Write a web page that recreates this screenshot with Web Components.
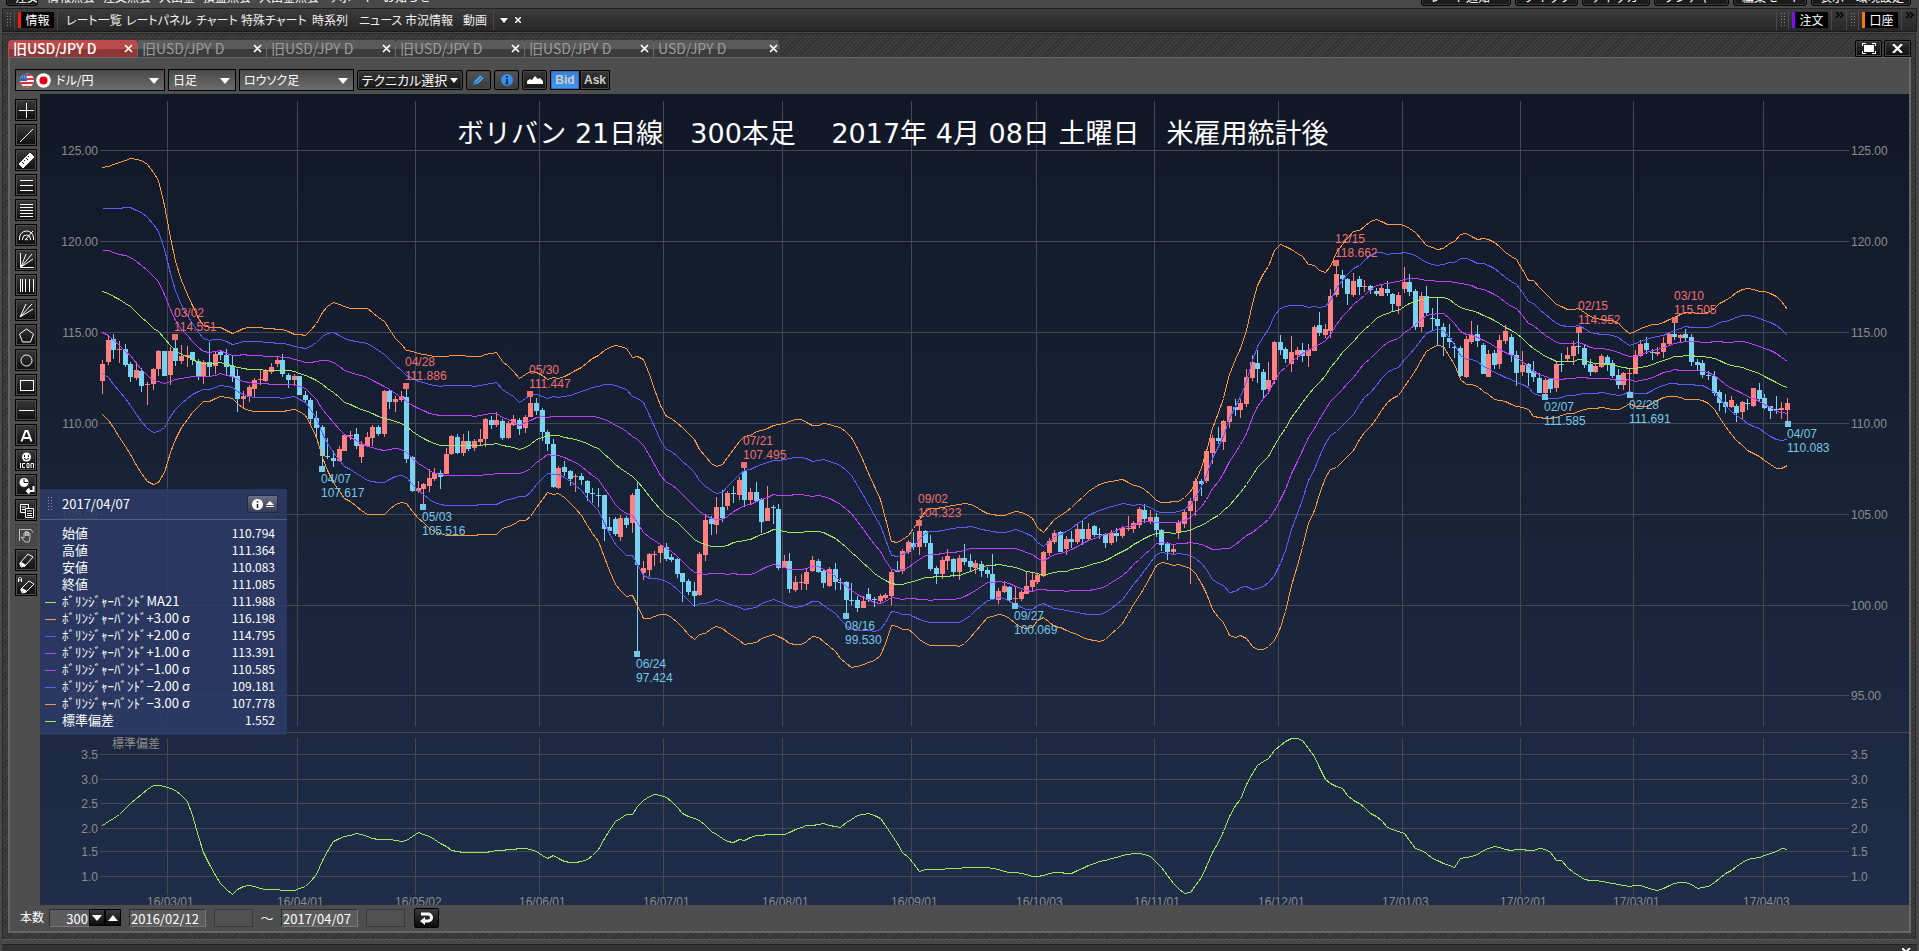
<!DOCTYPE html>
<html lang="ja">
<head>
<meta charset="utf-8">
<title>USD/JPY D</title>
<style>
  html, body { margin: 0; height: 100%; background: #484848; }
  body { overflow: hidden; font: 12px/16px "Noto Sans CJK JP", "Liberation Sans", sans-serif; color: #fff; }
</style>
</head>
<body>
<trading-desk></trading-desk>
<script>
const BASE = `*{box-sizing:border-box}button,input,select{font:inherit;color:inherit;margin:0;padding:0;border-radius:0}`;
class Piece extends HTMLElement {
  constructor() {
    super();
    this.attachShadow({ mode: 'open' }).innerHTML = `<style>${BASE}${this.css()}</style>${this.html()}`;
  }
  css() { return ''; }
  html() { return '<slot></slot>'; }
}

/* Cut-off row at the top edge */
customElements.define('top-strip', class extends Piece {
  css() { return `
    :host{display:flex;height:8px;overflow:hidden;align-items:flex-end;padding:0 8px 2px 6px;background:#484848}
    button{flex:none;height:22px;border:1px solid #000;border-radius:3px;background:#1b1b1b;box-shadow:inset 0 0 0 1px #383838;line-height:16px;text-align:left;padding:4px 0 0 8px;overflow:hidden;white-space:nowrap}
    nav{display:flex;gap:8px;padding:0 0 1px 9px;white-space:nowrap;flex:1}
    a{color:#fff;text-decoration:none}
    div{display:flex;gap:4px}`; }
  html() { return `<button style="width:32px">注文</button><nav>${['情報照会', '注文照会', '入出金', '損益照会', '入出金照会', 'サポート', 'お知らせ'].map(t => `<a href="#">${t}</a>`).join('')}</nav>
    <div>${[['レート通知', 90], ['クイック', 63], ['ティッカー', 68], ['ランチャー', 75], ['編集モード', 74], ['表示・環境設定', 100]].map(([t, w]) => `<button style="width:${w}px">${t}</button>`).join('')}</div>`; }
});

/* Category label with a coloured edge */
customElements.define('bar-label', class extends Piece {
  css() { return `
    :host{display:block}
    div{height:16px;border-left:3px solid var(--edge,#f00);background:#000;padding:0 4px;font-size:12px;line-height:15px;white-space:nowrap;min-width:36px;text-align:center}`; }
  html() { return `<div><slot></slot></div>`; }
});

customElements.define('info-bar', class extends Piece {
  css() { return `
    :host{display:flex;height:24px;margin:0 2px;border:1px solid #222;border-bottom-color:#1a1a1a;background:linear-gradient(#3c3c3c,#262626);align-items:center;font-feature-settings:"palt"}
    .grip{width:6px;height:16px;margin:0 2px 0 3px;background:radial-gradient(circle,#888 0 1px,transparent 1px) 0 0/3px 3px}
    .v{width:1px;height:20px;background:#4a4a4a}
    bar-label{margin:0 3px 0 3px}
    nav{display:grid;grid-template-columns:60px 70px 45px 71px 47px 46px 58px 30px;padding-left:8px;white-space:nowrap}
    a{color:#eee;text-decoration:none}
    button{background:none;border:0;width:14px;height:16px;display:grid;place-items:center}
    .sp{flex:1}
    .more{align-self:flex-start;width:14px;height:12px}`; }
  html() {
    const more = `<button class="more" aria-label="more"><svg width="9" height="6"><path d="M1 0l3 3-3 3M5 0l3 3-3 3" fill="none" stroke="#000" stroke-width="1.5"/></svg></button>`;
    return `<span class="grip"></span><span class="v"></span><bar-label style="--edge:#f21b0c">情報</bar-label><span class="v"></span>
    <nav>${['レート一覧', 'レートパネル', 'チャート', '特殊チャート', '時系列', 'ニュース', '市況情報', '動画'].map(t => `<a href="#">${t}</a>`).join('')}</nav>
    <span class="v"></span><button aria-label="menu" style="margin-left:3px"><svg width="8" height="5"><path d="M0 0h8l-4 5z" fill="#fff"/></svg></button>
    <button aria-label="close"><svg width="6" height="6"><path d="M0 0l6 6M6 0l-6 6" stroke="#fff" stroke-width="1.5"/></svg></button>
    <span class="sp"></span>
    <span class="v"></span><span class="grip"></span><span class="v"></span><bar-label style="--edge:#7d0cf2">注文</bar-label><span class="v"></span>${more}
    <span class="v"></span><span class="grip"></span><span class="v"></span><bar-label style="--edge:#f27a0c">口座</bar-label><span class="v"></span>${more}`; }
});

customElements.define('chart-tab', class extends Piece {
  css() { return `
    :host{display:block;width:129px;height:17px}
    div{display:flex;height:17px;align-items:center;justify-content:space-between;padding:0 4px;border-radius:4px 0 0 0;border-left:1px solid #6a6a6a;background:linear-gradient(#5a5a5a 0 50%,#3c3c3c 50%);color:#9c9c9c;font-size:14px;line-height:17px;white-space:nowrap}
    :host([active]) div{background:linear-gradient(#bb4a4a 0 50%,#8f3737 50%);border-color:#bb4a4a;color:#fff;font-weight:500}
    :host([last]) div{clip-path:polygon(0 0,97% 0,100% 100%,0 100%)}
    button{background:none;border:0;width:9px;height:9px;display:grid}`; }
  html() { return `<div><slot></slot><button aria-label="close tab"><svg width="9" height="9"><path d="M1 1l7 7M8 1l-7 7" stroke="#fff" stroke-width="1.7"/></svg></button></div>`; }
});

customElements.define('tab-strip', class extends Piece {
  css() { return `
    :host{display:flex;height:17px}
    .sp{flex:1}
    .w{width:27px;height:17px;border:1px solid #000;box-shadow:inset 0 0 0 1px #444;background:linear-gradient(#333,#0c0c0c);display:grid;place-items:center;border-radius:2px 2px 0 0}`; }
  html() { return `<slot></slot><span class="sp"></span>
    <button class="w" aria-label="maximise"><svg width="14" height="11"><path d="M0 3V0h4M10 0h4v3M14 8v3h-4M4 11H0V8" fill="none" stroke="#fff" stroke-width="2"/><rect x="2" y="2" width="10" height="7" fill="#fff"/></svg></button>
    <button class="w" style="margin-left:2px" aria-label="close"><svg width="11" height="9"><path d="M1 0l9 9M10 0l-9 9" stroke="#fff" stroke-width="2.2"/></svg></button>`; }
});

customElements.define('chart-toolbar', class extends Piece {
  css() { return `
    :host{display:flex;height:36px;padding:11px 0 0 5px;gap:3px;background:#4e4e4e;font-size:13px;font-feature-settings:"palt"}
    label{position:relative;display:block}
    select{appearance:none;display:block;width:100%;height:22px;border:1px solid #000;background:linear-gradient(#4a4a4a,#6c6c6c);padding:0 20px 1px 4px;line-height:18px;font-size:12px}
    .pair select{padding-left:40px}
    label>svg.ar{position:absolute;right:6px;top:9px}
    .flags{position:absolute;left:4px;top:4px}
    .b{height:20px;margin-top:1px;border:1px solid #000;border-radius:2px;background:linear-gradient(#383838,#141414);box-shadow:inset 0 0 0 1px #464646;width:25px;display:flex;align-items:center;justify-content:center}
    .g{background:linear-gradient(#545454,#3c3c3c)}
    .tech{width:106px;gap:3px;font-size:13px;white-space:nowrap}
    .ba{display:flex;font:bold 12px/16px "Liberation Sans",sans-serif}
    .ba .b{width:30px;border-radius:0;color:#ccc}
    .ba .on{background:linear-gradient(#3a7fd0,#3f97f0);box-shadow:inset 0 0 0 1px #2c70c4}`; }
  html() {
    const ar = `<svg class="ar" width="10" height="6"><path d="M0 0h10l-5 6z" fill="#fff"/></svg>`;
    return `
    <label class="pair" style="width:150px"><select aria-label="通貨ペア"><option>ドル/円</option></select>
      <svg class="flags" width="33" height="15"><defs><clipPath id="c"><circle cx="8" cy="7.500" r="7"/></clipPath></defs>
      <g clip-path="url(#c)"><rect width="16" height="15" fill="#f4eeee"/><path d="M0 2h16M0 6h16M0 10h16M0 14h16" stroke="#d8303a" stroke-width="2"/><rect width="8" height="8" fill="#2f5fae"/><path d="M1 3h7M1 5h7" stroke="#b8cdf0" stroke-dasharray="1 1"/></g>
      <circle cx="24.500" cy="7.500" r="7.300" fill="#fafafa"/><circle cx="24.500" cy="7.500" r="4" fill="#e80010"/></svg>${ar}</label>
    <label style="width:68px"><select aria-label="足種"><option>日足</option></select>${ar}</label>
    <label style="width:115px"><select aria-label="表示"><option>ロウソク足</option></select>${ar}</label>
    <button class="b tech">テクニカル選択<svg width="8" height="5"><path d="M0 0h8l-4 5z" fill="#fff"/></svg></button>
    <button class="b g" aria-label="描画"><svg width="13" height="12"><path d="M1 11l1-4 6-6 4 3-7 6z" fill="#2e7fd8"/><path d="M3 8l6-6M5 10l6-6" stroke="#9cc8ff" stroke-width=".8"/></svg></button>
    <button class="b g" aria-label="情報"><svg width="12" height="12"><circle cx="6" cy="6" r="6" fill="#3390ee"/><path d="M6 2v2M6 5v5M4.500 9.500h3" stroke="#234" stroke-width="1.800"/></svg></button>
    <button class="b" aria-label="山"><svg width="16" height="10"><path d="M0 9V6l3-2 2 1 3-4 3 3 2-1 3 3v3z" fill="#fff"/></svg></button>
    <div class="ba"><button class="b on">Bid</button><button class="b">Ask</button></div>`; }
});

const TOOLS = [
  ['十字', '<path d="M9.500 2v15M2 9.500h15"/>'],
  ['直線', '<path d="M3 16L16 3"/>'],
  ['定規', '<path d="M2 13L13 2l4 4L6 17z" fill="#fff"/><path d="M5 11l2 2M7 9l1 1M9 7l2 2M11 5l1 1" stroke="#111"/>'],
  ['三本線', '<path d="M3 4.500h13M3 9.500h13M3 14.500h13"/>'],
  ['五本線', '<path d="M3 3.500h13M3 6.500h13M3 9.500h13M3 12.500h13M3 15.500h13"/>'],
  ['円弧', '<path d="M2.500 14v-2a7 7 0 0 1 14 0v2M5.500 14v-1a4 4 0 0 1 8 0v1M8 14a2 2 0 0 1 3 0M8 14l8-9"/>'],
  ['ファン', '<path d="M3.500 2v14.500H17M4 16L9 3M4 16L15 3M4 16L16 8"/>'],
  ['縦線', '<path d="M3.500 3v13M5.500 3v13M8.500 3v13M12.500 3v13M16.500 3v13"/>'],
  ['放射線', '<path d="M3 16L9 3M3 16L15 3M3 16L16 8"/>'],
  ['五角形', '<path d="M9.500 3l7 5-3 8h-8l-3-8z"/>'],
  ['円', '<circle cx="9.500" cy="9.500" r="5.500"/>'],
  ['四角', '<rect x="3.500" y="4.500" width="13" height="10"/>'],
  ['水平線', '<path d="M2 9.500h15"/>'],
  ['文字', '<path d="M4.500 15.500L8.500 5h2l4 10.500M6.500 12h6" stroke-width="2"/>'],
  ['アイコン', '<circle cx="9.500" cy="6" r="4.500" fill="#fff" stroke="none"/><path d="M7.500 4v2M11.500 4v2M7 7.500q2.500 2 5 0" stroke="#111"/><path d="M3.500 12v5M8 12.500H5.500v4H8M10 12.500h2v4h-2zM14 17v-4.500h2.500V17"/>'],
  ['履歴', '<circle cx="7" cy="6.500" r="4.500" fill="#fff" stroke="none"/><path d="M7 3v3.500h4" stroke="#111"/><path d="M16.500 10v5H10M12.500 12.500L10 15l2.500 2.500" stroke-width="2"/>'],
  ['複写', '<path d="M3.500 3.500h8v8h-8zM5 6h4M5 8.500h4"/><path d="M8.500 7.500h8v9h-8z" fill="#111"/><path d="M10 10h5M10 12.500h5M10 14.500h5"/>'],
  ['移動', '<path d="M2.500 15V3.500H14l2 3"/><path d="M8 16l-4-5 3 1V7h1.500v3V5.500H10V10V6h1.500v4V7.500H13V12l-1 4z"/>'],
  ['消去', '<path d="M3 12l8-9 5 3-8 9-4 1z"/><path d="M3 12l5 3" stroke-width="3"/>'],
  ['全消去', '<path d="M4 13l8-8 5 3-8 8-4 1zM1.500 6V2.500l1-1h1l1 1V6M2 4h3"/><path d="M4 13l5 3" stroke-width="3"/>'],
];
customElements.define('draw-tools', class extends Piece {
  css() { return `
    :host{display:flex;flex-direction:column;gap:3px;width:30px;padding:5px 0 0 5px;background:#4e4e4e}
    button{width:22px;height:22px;border:1px solid #000;background:linear-gradient(#3a3a3a,#0e0e0e);box-shadow:inset 0 0 0 1px #4c4c4c;display:grid;place-items:center}
    button:disabled{background:#444;border-color:#3a3a3a;opacity:.65}
    svg{display:block;fill:none;stroke:#fff}`; }
  html() { return TOOLS.map(([n, d]) => `<button aria-label="${n}"${n === '移動' ? ' disabled' : ''}><svg width="19" height="19">${d}</svg></button>`).join(''); }
});

/* ---- chart data: each block has an origin and a step per unit; candles are high, top, bottom, low, u(p)/d(own) ---- */
const CANDLES = [
  [90, `809 822 873 911u 738 750 815 825u 732 747 780 806d 753 777 780 818u 762 777 825 830d 816 822 861 876d 815 840 864 870u 834 843 888 906d 876 882 885 945u 833 837 882 900u
780 783 838 858u 783 783 858 858d 771 783 855 884u 745 774 813 828d 765 798 813 822u 768 796 800 831u 786 786 810 825d 807 813 858 870d 810 816 860 882u 756 816 830 858d
786 791 828 852u 782 786 795 810d 777 795 831 858d 795 828 860 876d 837 858 927 966d 903 917 928 956u 885 890 921 936u 864 870 897 924u 840 867 870 885u 836 843 873 876u
819 831 846 852u 800 810 822 831u 792 810 852 861d 848 855 870 894d 852 858 870 888u 858 858 915 915d 903 915 930 940d 924 930 987 1006d 963 984 1014 1040d 1005 1011 1098 1130d
1045 1098 1101 1107d 1083 1104 1112 1131d 1067 1077 1113 1116u 1032 1035 1083 1083u 1023 1035 1038 1050u 1015 1033 1068 1077d 1053 1062 1101 1119u 1026 1041 1068 1068u 1005 1011 1045 1068u 1005 1011 1032 1038d
900 903 1032 1041u 900 903 936 957d 918 927 936 966u 903 918 930 936u 897 921 1107 1119d`],
  [100, `1067 1072 1173 1175d 1142 1163 1172 1178u 1149 1152 1167 1212u 1107 1134 1158 1175u 1104 1119 1137 1143u 1110 1119 1131 1167d 1044 1062 1122 1122u 1005 1008 1062 1064u 1002 1011 1059 1062d 1002 1023 1059 1068u
993 1023 1047 1052d 1018 1023 1044 1054u 987 1017 1026 1036u 953 957 1017 1040u 948 960 975 987d 936 960 975 980u 957 963 1014 1020d 963 968 1014 1016u 945 957 975 977u 955 960 987 1005d
945 951 984 998u 890 909 950 950u 894 909 933 945d 924 930 996 1023d 990 996 1032 1052d 1017 1032 1161 1164d 1098 1104 1164 1166u 1083 1101 1116 1128d 1110 1113 1137 1158d 1122 1128 1131 1176u
1119 1128 1140 1155d 1140 1143 1179 1203d 1163 1180 1183 1208d 1163 1185 1188 1221d 1185 1185 1287 1323d 1251 1282 1293 1293d 1251 1257 1302 1308d 1245 1254 1311 1322u 1248 1254 1275 1284d 1180 1185 1269 1298u`],
  [380, `303 327 555 815d 543 564 579 600u 519 521 570 592u 513 521 524 558u 492 497 519 549u 489 502 537 543d 521 530 540 546d 534 537 582 594d 579 579 605 665d 597 602 636 645d
606 633 648 682d 516 521 645 648u 402 420 525 543u 408 417 432 465d 352 381 434 462u 330 381 414 426d 333 339 378 390u 318 339 342 369d 291 300 345 360u 264 272 360 381d
324 336 360 372u 306 336 363 366d 354 357 426 459d 318 384 423 423u 375 381 384 432d 372 387 564 570d 525 543 563 565u 519 543 627 638d 588 606 630 636u 582 605 608 630u
563 576 611 629u 528 540 573 576u 538 543 576 578d 567 573 609 624d 561 567 618 621u 549 567 606 630d 594 606 609 630d 603 606 660 705d 609 660 663 675d 648 660 684 696d
648 663 684 684u 624 642 660 667d 651 658 661 681d 642 648 663 669u 639 645 654 659u 570 576 648 675u 543 572 575 575d 507 513 573 581u 480 486 516 522u 456 489 501 510d
438 453 500 525u 450 453 489 501d 465 489 567 573d 558 564 582 612d 531 540 582 597u 507 528 542 570u 534 537 576 591d 525 534 576 600u 492 534 545 555d 522 543 560 573d
540 549 564 582u 543 552 573 591d 561 570 582 594d 522 582 657 657d 624 633 660 672u 603 618 636 639u 618 621 660 665d 621 654 657 670u 630 636 657 663u 576 618 642 642u
579 600 621 636u 582 585 606 612u 513 516 588 591u 474 483 519 528u 450 459 486 493u 453 456 516 516d`],
  [400, `408 417 447 465u 393 417 427 444d 370 387 426 432u 363 387 417 435d 369 387 417 420u 375 378 405 410d 384 402 405 417d 399 402 429 444d 390 399 429 434u 384 399 408 427d
378 384 408 413u 348 384 387 393u 363 369 387 399u 321 327 375 384u 312 330 357 369d 330 351 366 372u 338 351 390 411d 387 390 435 453d 426 429 456 480d 435 447 456 462u
360 367 396 417u 330 336 372 384u 294 303 333 552u 234 243 303 348u 237 243 252 288d 147 153 243 249u 105 114 159 192u 81 114 122 132d 60 63 126 150u 18 18 66 84u`],
  [200, `597 620 630 648d 597 609 630 654u 507 531 612 620u 465 486 534 543u 450 489 507 548d 507 516 570 597d 486 540 567 582u 423 426 540 552u 405 426 450 465d 441 447 477 489d
408 456 492 516u 441 450 465 480u 429 450 468 486d 432 450 468 501u 375 381 453 453u 336 375 399 408d 372 387 405 414u 267 288 393 414u 198 222 285 291u 210 225 236 264d
234 237 282 315d 219 242 285 290u 228 237 261 285d 240 258 261 276u 255 258 270 282d 264 272 282 288d 255 264 288 288u 243 267 279 288d 279 282 312 333d 276 285 318 342u
201 246 267 279u 222 246 276 288d 267 273 381 390d 276 288 381 396u 258 288 339 348d 324 354 357 390d 294 357 378 438d 369 381 411 468d 372 414 426 444d 429 441 445 474d
438 445 528 531d 408 417 531 534u 363 405 426 432u 375 402 423 441d 429 435 521 523d 450 462 530 531u 450 459 495 507d 405 420 492 507u 375 393 423 432u 402 411 465 486d
453 465 519 558d 453 495 516 528u 489 492 519 558d 483 513 531 546d 519 534 579 579d 534 540 579 588u 534 537 567 579d 486 492 564 576u 459 492 495 516d 441 465 476 486u
423 438 468 495u 396 438 441 462d 435 444 495 504d 477 492 516 528d 492 498 516 519u 462 468 501 504u 465 471 492 513d 480 489 528 534d 507 525 555 567d 516 519 555 570u
507 519 522 576u 450 465 522 522u 420 432 468 471u 411 429 450 462d 447 456 459 480d 441 456 462 468u 411 429 456 474u 396 402 432 435u 366 402 411 420d 402 405 414 426u
387 402 413 426d 402 411 486 498d 477 486 495 510d 480 489 525 534d 513 525 529 540d 513 528 579 588d 570 576 609 633d 582 606 621 639d 588 600 621 624u 612 618 639 666d
603 606 636 660u 597 608 612 630d 564 564 618 621u 549 570 597 603d 582 594 624 627d 618 618 633 657d 588 627 630 642d 606 624 630 657u 594 609 630 663u`],
];
const MA = [
  [0, 90, 3, `307 603 325 609 350 624 390 648 430 687 460 715 475 724 495 748 520 775 540 791 570 803 600 819 625 824 661 816 690 825 720 833 760 838 880 843 913 855 945 869 1000 907 1035 938 1100 964 1150 984 1200 997`],
  [400, 100, 3, `19 980 47 1003 97 1030 130 1037 180 1036 230 1037 289 1030 325 1039 360 1048 380 1040 410 1018 440 1007 475 1007 500 1012`],
  [580, 380, 3, `0 182 55 205 80 228 110 258 160 290 172 303 210 352 250 400 282 418 320 456 345 480 375 494 400 499 430 499 460 488 490 480 515 477 545 462 580 449 630 457 685 455 710 451 735 459 770 478 800 504 850 549 885 582 915 602 940 612 970 613 1000 603 1040 592 1140 585 1180 569 1220 556`],
  [1000, 400, 3, `0 494 45 501 85 516 130 525 165 517 200 513 245 501 310 484 345 466 385 444 430 415 465 399 490 397 520 400 560 394 610 373 660 342 700 303 740 251 770 204 805 168 835 115 865 72`],
  [1290, 200, 3, `0 657 55 582 100 533 125 497 155 460 190 423 220 390 265 351 300 336 325 330 345 316 385 300 415 292 465 292 480 300 515 324 545 330 600 353 655 387 685 402 715 434 740 452 770 470 800 483 850 483 870 478 900 488 960 492 1000 503 1035 506 1070 498 1120 480 1150 470 1190 466 1240 470 1280 477 1310 492 1360 503 1405 519 1440 537 1475 555 1496 563`],
];
const TOP3 = [
  [0, 90, 3, `307 233 355 218 393 203 436 215 455 240 475 272 490 328 500 385 515 465 535 553 555 596 575 642 600 695 615 713 660 712 675 720 695 731 730 714 770 712 850 719 880 731 915 737 945 708 960 678 978 650 1003 634 1030 648 1055 655 1100 654 1125 674 1155 697 1180 738`],
  [400, 100, 3, `19 750 60 762 110 770 160 766 235 769 289 757 310 787 335 808 360 837 380 818 400 812 420 821 447 841 460 832 480 835 505 824 545 800 575 776 595 767 620 744 650 735 680 745 697 771 715 769 730 778 750 828 775 903 795 946 820 957 850 986 880 1012 895 1045 910 1063 940 1096 955 1101 970 1092 985 1068 1010 1035 1030 1008 1050 1005 1070 992 1090 989 1120 975 1150 972 1180 959 1205 959 1240 979 1270 970 1325 982 1355 1012 1385 1072 1410 1132 1440 1195 1460 1270`],
  [580, 380, 3, `935 487 955 487 985 467 1010 430 1025 405 1045 387 1090 382 1145 370 1175 374 1200 388 1225 400`],
  [1000, 400, 3, `0 347 15 347 50 331 75 339 97 355 112 382 130 397 165 354 190 343 235 302 265 273 305 247 370 238 395 254 420 260 440 270 475 309 535 303 565 285 580 260 605 200 622 145 635 90`],
  [1290, 200, 3, `-201 600 -180 515 -147 440 -126 375 -105 270 -81 222 -60 190 -51 155 -27 130 0 146 35 168 55 193 73 195 90 213 108 216 124 195 140 155 165 122 190 95 215 88 235 66 260 56 292 73 345 75 375 96 412 138 445 149 462 145 480 128 497 124 515 97 535 103 565 118 583 113 600 122 615 126 650 162 682 180 700 215 715 240 735 242 750 266 775 288 800 315 835 328 870 325 900 350 930 358 975 361 1000 385 1020 402 1045 388 1080 373 1110 372 1150 352 1185 336 1235 340 1262 335 1285 313 1310 297 1345 273 1380 262 1400 272 1430 276 1460 290 1480 310 1496 333`],
];
const SD = [
  [0, 480, 3, `307 1037 360 1002 400 962 440 929 460 916 485 916 525 929 560 960 575 1000 590 1055 610 1117 630 1158 660 1208 695 1243 720 1222 745 1216 790 1227 880 1231 920 1219 950 1181 970 1135 1000 1085 1020 1074 1070 1060 1095 1065 1120 1077 1175 1078`],
  [400, 700, 1.96, `0 424 15 419 35 397 55 406 75 425 103 452 130 457 165 457 185 451 245 445 268 454 290 475 301 467 327 487 352 487 367 478 390 447 405 402 422 363 445 341 457 343 465 320 480 294 500 283 520 290 538 312 553 340 572 354 588 360 605 387 640 425 655 428 665 419 675 421 695 407 733 402 757 402 790 378 832 371 862 382 880 361 897 346 919 338 940 353 967 410 985 458 995 468 1018 514 1030 507 1065 507 1110 502 1150 502 1170 506 1190 516 1210 518 1240 528 1250 528 1288 516 1313 523 1350 495 1380 481 1435 460 1452 460`],
  [1150, 700, 2.039, `0 468 20 497 45 545 68 579 82 576 105 530 130 448 140 426 163 345 178 305 185 298 200 240 218 197 243 174 255 148 278 120 290 115 305 115 313 125 335 170 357 238 372 254 392 266 407 294 430 313 450 340 465 350 485 383 520 402 541 444 562 457 575 473 600 492 622 502 634 472 660 469 680 449 705 438 730 452 755 448 780 452 797 442 815 454 828 481 840 482 857 511 885 538 935 547 970 559 1005 556 1027 571 1040 571 1065 552 1085 545 1105 555 1118 566 1145 555 1170 521 1185 511 1215 479 1240 473 1265 461 1288 445 1302 449`],
];
const MARKS = [
  ['03/02', '114.551', 175, 337, 1], ['04/28', '111.886', 406, 386, 1], ['05/30', '111.447', 530, 394, 1], ['07/21', '107.495', 744, 465, 1],
  ['09/02', '104.323', 919, 523, 1], ['12/15', '118.662', 1336, 263, 1], ['02/15', '114.952', 1579, 330, 1], ['03/10', '115.505', 1675, 320, 1],
  ['04/07', '107.617', 322, 469, 0], ['05/03', '105.516', 423, 507, 0], ['06/24', '97.424', 637, 654, 0], ['08/16', '99.530', 846, 616, 0],
  ['09/27', '100.069', 1015, 606, 0], ['02/07', '111.585', 1545, 397, 0], ['02/28', '111.691', 1630, 395, 0], ['04/07', '110.083', 1788, 424, 0],
];
const MONTHS = [['16/03/01', 167], ['16/04/01', 297], ['16/05/02', 415], ['16/06/01', 539], ['16/07/01', 663], ['16/08/01', 782], ['16/09/01', 911], ['16/10/03', 1036], ['16/11/01', 1154], ['16/12/01', 1278], ['17/01/03', 1402], ['17/02/01', 1520], ['17/03/01', 1633], ['17/04/03', 1763]];
const PRICES = [['125.00', 150], ['120.00', 241], ['115.00', 332], ['110.00', 423], ['105.00', 514], ['100.00', 605], ['95.00', 695]];
const DEVS = [['3.5', 754], ['3.0', 779], ['2.5', 803], ['2.0', 828], ['1.5', 851], ['1.0', 876]];

const points = blocks => blocks.flatMap(([ox, oy, sx, s]) => {
  const v = s.trim().split(/\s+/).map(Number), out = [];
  for (let i = 0; i < v.length; i += 2) out.push([ox + v[i] / sx, oy + v[i + 1] / 3]);
  return out;
});
const at = (pts, x) => {
  let k = 1;
  while (k < pts.length - 1 && pts[k][0] < x) k++;
  const [a, b] = [pts[k - 1], pts[k]];
  return a[1] + (b[1] - a[1]) * Math.min(1, Math.max(0, (x - a[0]) / (b[0] - a[0])));
};
const xOf = i => Math.round(102 + i * 5.635);

customElements.define('price-chart', class extends Piece {
  css() { return `
    :host{display:block;background:linear-gradient(#111726,#1a253b 62%,#1f2d49)}
    svg{display:block;width:100%;height:100%}
    .grid{stroke:#444854;shape-rendering:crispEdges}
    text{font:12px "Liberation Sans",sans-serif;fill:#8c8c8c;white-space:pre}
    .band{fill:none;stroke-width:1;shape-rendering:crispEdges}
    .box{shape-rendering:crispEdges}
    .hi{fill:#f07070}.lo{fill:#76c8e4}
    text.sub{font:12px "Noto Sans CJK JP",sans-serif}
    text.title{font:27px "DejaVu Sans","Noto Sans CJK JP",sans-serif;fill:#fff}`; }
  html() {
    let s = '<g class="grid">';
    for (const [, y] of [...PRICES, ...DEVS]) s += `<path d="M100 ${y + .5}H1849"/>`;
    for (const [, x] of MONTHS) s += `<path d="M${x + .5} 101V726M${x + .5} 738V895"/>`;
    s += '<path d="M40 732.500H1909"/></g>';
    for (const [t, y] of [...PRICES, ...DEVS]) s += `<text x="98" y="${y + 5}" text-anchor="end">${t}</text><text x="1851" y="${y + 5}">${t}</text>`;
    for (const [t, x] of MONTHS) s += `<text x="${x - 20}" y="906">${t}</text>`;
    s += '<text class="sub" x="112" y="748">標準偏差</text><g class="box">';
    let i = 0;
    for (const [oy, rows] of CANDLES) for (const m of rows.matchAll(/(\d+) (\d+) (\d+) (\d+)([ud])/g)) {
      const [h, t, b, l] = m.slice(1, 5).map(v => Math.round(oy + v / 3)), x = xOf(i++);
      s += `<g fill="${m[5] === 'u' ? '#ff8080' : '#7ad2f2'}"><rect x="${x}" y="${h}" width="1" height="${Math.max(1, l - h)}"/><rect x="${x - 2}" y="${t}" width="5" height="${Math.max(1, b - t)}"/></g>`;
    }
    s += '</g>';
    const ma = points(MA), up = points(TOP3), sd = points(SD), xs = Array.from({ length: i }, (_, k) => xOf(k));
    const line = (f, c) => `<polyline class="band" stroke="${c}" points="${xs.map(x => `${x + .5},${Math.round(f(x + .3)) + .5}`).join(' ')}"/>`;
    for (const [k, c] of [[3, '#ff9a3c'], [2, '#5c5cff'], [1, '#c040ff'], [0, '#a0e860'], [-1, '#c040ff'], [-2, '#5c5cff'], [-3, '#ff9a3c']])
      s += line(x => { const m = at(ma, x); return m + (at(up, x) - m) * k / 3 - .3; }, c);
    s += line(x => at(sd, x) - .3, '#a0e860');
    for (const [d, p, x, y, hi] of MARKS) {
      const c = hi ? 'hi' : 'lo', [a, b] = hi ? [-20, -6] : [14, 28];
      s += `<rect class="${c} box" x="${x - 3}" y="${y - 3}" width="6" height="6"/><text class="${c}" x="${x - 1}" y="${y + a}">${d}</text><text class="${c}" x="${x - 1}" y="${y + b}">${p}</text>`;
    }
    s += '<text class="title" x="457" y="143">ボリバン 21日線　300本足　 2017年 4月 08日 土曜日　米雇用統計後</text>';
    return `<svg viewBox="40 94 1869 811">${s}</svg>`;
  }
});

customElements.define('quote-panel', class extends Piece {
  css() { return `
    :host{display:block;width:247px;height:246px;background:rgba(44,59,102,.88);font-size:13px}
    header{display:flex;height:31px;align-items:center;padding:0 9px 0 7px;border-bottom:1px solid #56607c}
    .grip{width:6px;height:16px;margin-right:9px;background:radial-gradient(circle,#8890a8 0 1px,transparent 1px) 0 0/3px 3px}
    time{flex:1}
    header button{width:31px;height:18px;border:1px solid #222a44;background:linear-gradient(#6a7088,#363c54);display:flex;align-items:center;justify-content:center;gap:3px;border-radius:2px}
    table{border-collapse:collapse;width:100%;margin-top:4px}
    td,th{padding:0;height:17px;line-height:17px;font-weight:400;text-align:left;white-space:nowrap}
    th{padding-left:22px;position:relative}
    th i{position:absolute;left:5px;top:10px;width:11px;height:1px}
    td{text-align:right;padding-right:12px;font-size:12px}`; }
  html() {
    const n = 'ﾎﾞﾘﾝｼﾞｬｰﾊﾞﾝﾄﾞ';
    const rows = [['始値', '110.794'], ['高値', '111.364'], ['安値', '110.083'], ['終値', '111.085'], [n + 'MA21', '111.988', '#a0e860'], [n + '+3.00 σ', '116.198', '#ff9a3c'], [n + '+2.00 σ', '114.795', '#5c5cff'], [n + '+1.00 σ', '113.391', '#c040ff'],
      [n + '−1.00 σ', '110.585', '#c040ff'], [n + '−2.00 σ', '109.181', '#5c5cff'], [n + '−3.00 σ', '107.778', '#ff9a3c'], ['標準偏差', '1.552', '#a0e860']];
    return `<header><span class="grip"></span><time>2017/04/07</time><button aria-label="表示切替"><svg width="11" height="11"><circle cx="5.500" cy="5.500" r="5.500" fill="#fff"/><path d="M5.500 2v1.500M5.500 5v4" stroke="#223" stroke-width="1.600"/></svg><svg width="8" height="7"><path d="M0 4h8L4 0zM0 5h8v1H0z" fill="#fff"/></svg></button></header>
    <table>${rows.map(([a, b, c]) => `<tr><th scope="row">${c ? `<i style="background:${c}"></i>` : ''}${a}</th><td>${b}</td></tr>`).join('')}</table>`; }
});

customElements.define('range-bar', class extends Piece {
  css() { return `
    :host{display:flex;height:26px;align-items:flex-start;padding:4px 0 0 10px;background:#4e4e4e;font-size:13px;line-height:17px}
    label{font-size:12px;width:29px;line-height:16px}
    input{height:18px;border:1px solid #2c2c2c;border-right-color:#777;border-bottom-color:#777;background:#5c5c5c;padding:0 1px}
    .n{width:40px;text-align:right;border-right:0}
    .d{width:77px}.e{width:39px;background:#505050;border-color:#3a3a3a}
    button{border:1px solid #000;background:linear-gradient(#3a3a3a,#0c0c0c);width:16px;height:17px;display:grid;place-items:center}
    .r{width:25px;height:20px;margin:-1px 0 0 9px;border-radius:2px}`; }
  html() { return `<label for="n">本数</label><input id="n" class="n" value="300"><button aria-label="減らす"><svg width="10" height="6"><path d="M0 0h10l-5 6z" fill="#fff"/></svg></button><button aria-label="増やす"><svg width="10" height="6"><path d="M0 6h10L5 0z" fill="#fff"/></svg></button>
    <input class="d" style="margin-left:8px" aria-label="開始日" value="2016/02/12"><input class="e" style="margin-left:8px" aria-label="開始時刻"><span style="width:28px;text-align:center">～</span>
    <input class="d" aria-label="終了日" value="2017/04/07"><input class="e" style="margin-left:8px" aria-label="終了時刻">
    <button class="r" aria-label="戻る"><svg width="15" height="13"><path d="M2 2h7a3 3 0 0 1 0 7H4" fill="none" stroke="#fff" stroke-width="3"/><path d="M6 5v8L1 9z" fill="#fff"/></svg></button>`; }
});

customElements.define('trading-desk', class extends Piece {
  css() { return `
    :host{display:flex;flex-direction:column;height:100vh;background:#484848}
    .frame{flex:1;min-height:0;display:flex;flex-direction:column;margin:1px 3px 0 2px;padding:6px 4px 6px 5px;border:1px solid #2a2a2a;border-bottom-color:#5a5a5a;background:repeating-linear-gradient(135deg,#303030 0 1px,#3e3e3e 1px 3px)}
    .body{flex:1;min-height:0;display:flex;flex-direction:column;border:2px solid #686666;border-top-width:1px}
    .mid{flex:1;min-height:0;display:flex;position:relative}
    price-chart{flex:1;min-width:0}
    quote-panel{position:absolute;left:30px;bottom:170px}
    footer{height:7px;margin:4px 2px 0;background:#333;border-top:1px solid #222;display:flex;justify-content:flex-end}
    footer svg{margin:3px 6px 0 0}`; }
  html() { return `<top-strip></top-strip><info-bar></info-bar>
    <div class="frame">
      <tab-strip><chart-tab active>旧USD/JPY D</chart-tab>${'<chart-tab>旧USD/JPY D</chart-tab>'.repeat(4)}<chart-tab last>USD/JPY D</chart-tab></tab-strip>
      <div class="body"><chart-toolbar></chart-toolbar>
        <div class="mid"><draw-tools></draw-tools><price-chart></price-chart><quote-panel></quote-panel></div>
        <range-bar></range-bar></div>
    </div>
    <footer><svg width="9" height="4"><path d="M0 0l8 8M8 0l-8 8" stroke="#fff" stroke-width="2"/></svg></footer>`; }
});
</script>
</body>
</html>
